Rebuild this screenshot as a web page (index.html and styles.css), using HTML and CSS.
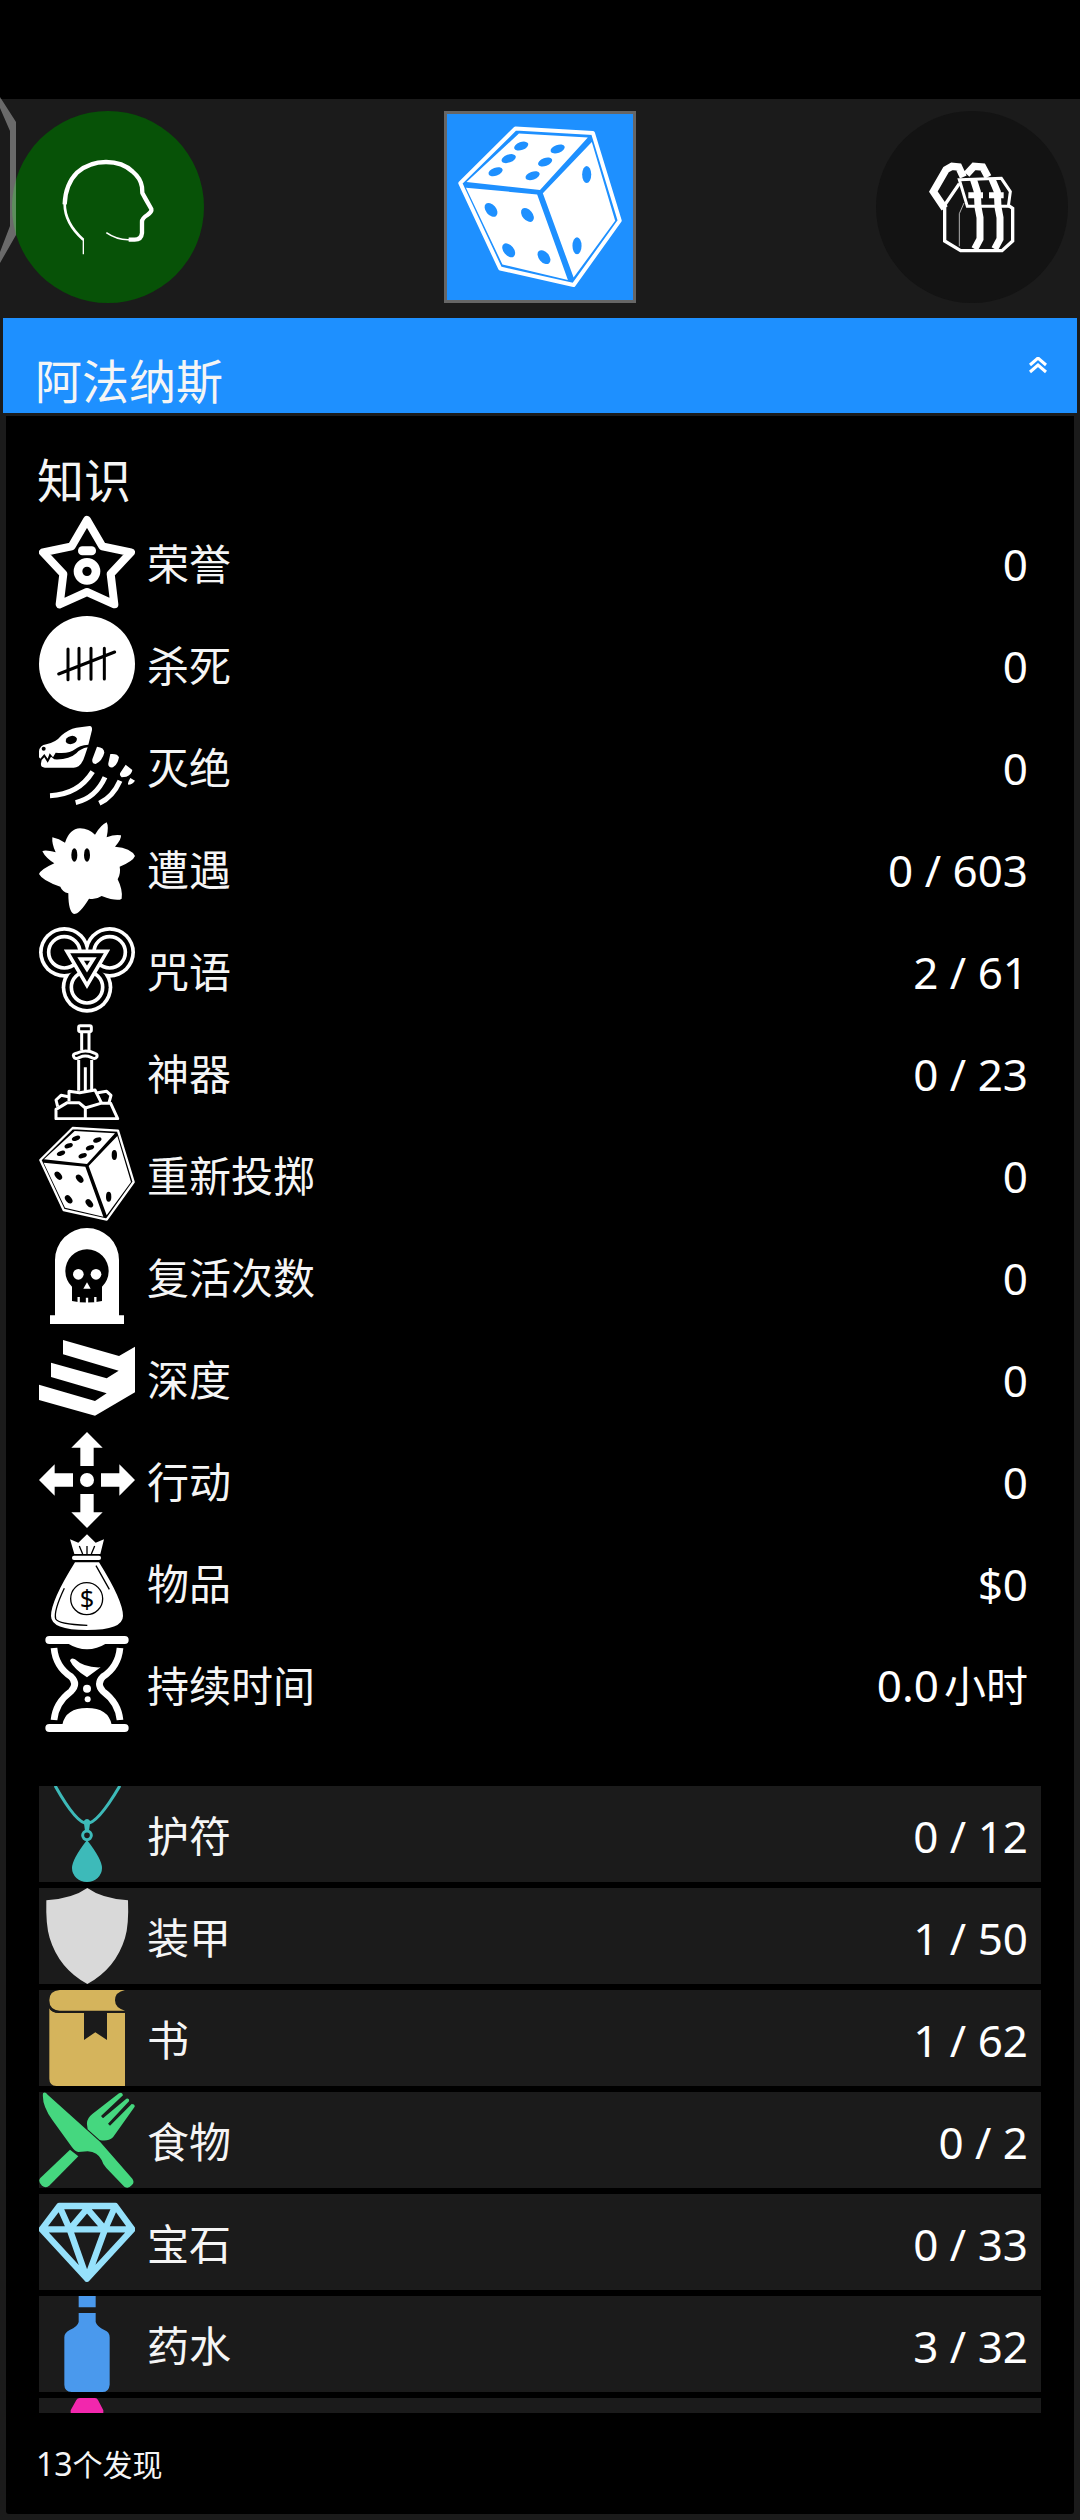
FILE: index.html
```
<!DOCTYPE html>
<html lang="zh-CN">
<head>
    <meta charset="UTF-8">
    <meta name="viewport" content="width=device-width, initial-scale=1.0">
    <title>知识</title>
    <link rel="stylesheet" href="styles.css">
</head>
<body>
    <!-- shared die, used in the header and in the stats -->
    <svg class="defs" aria-hidden="true">
        <symbol id="die" viewBox="0 0 288 288">
            <path d="M101 6L237 14L284 168L203 281L74 252L4 102Z" fill="none" stroke="currentColor" stroke-width="7" stroke-linejoin="round"/>
            <path d="M107 15L228 22L144 114L15 100ZM14 110L139 122L193 272L78 245ZM235 30L276 168L203 268L149 120Z" fill="currentColor"/>
            <g class="pips">
                <ellipse cx="111" cy="37" rx="13" ry="7" transform="rotate(-20 111 37)"/>
                <ellipse cx="89" cy="59" rx="13" ry="7" transform="rotate(-20 89 59)"/>
                <ellipse cx="66" cy="82" rx="13" ry="7" transform="rotate(-20 66 82)"/>
                <ellipse cx="175" cy="42" rx="13" ry="7" transform="rotate(-20 175 42)"/>
                <ellipse cx="153" cy="65" rx="13" ry="7" transform="rotate(-20 153 65)"/>
                <ellipse cx="131" cy="89" rx="13" ry="7" transform="rotate(-20 131 89)"/>
                <ellipse cx="58" cy="149" rx="9" ry="14" transform="rotate(-40 58 149)"/>
                <ellipse cx="122" cy="158" rx="9" ry="14" transform="rotate(-40 122 158)"/>
                <ellipse cx="89" cy="220" rx="9" ry="14" transform="rotate(-40 89 220)"/>
                <ellipse cx="151" cy="232" rx="9" ry="14" transform="rotate(-40 151 232)"/>
                <ellipse cx="226" cy="87" rx="8" ry="15"/>
                <ellipse cx="209" cy="212" rx="8" ry="15"/>
            </g>
        </symbol>
    </svg>

    <header class="toolbar">
        <button class="tool head" aria-label="角色">
            <svg class="icon line" viewBox="0 0 288 288">
                <path d="M70 286V240" stroke-width="4"/>
                <path d="M70 242Q14 192 14 134" stroke-width="8"/>
                <path d="M14 136Q16 76 52 40Q88 9 138 9Q188 9 218 38Q242 58 246 84L247 102L258 122L274 150Q276 158 262 168Q246 178 246 188V222Q244 242 224 242H206" stroke-width="13"/>
                <path d="M210 242Q172 244 139 221" stroke-width="5"/>
            </svg>
        </button>
        <button class="tool dice" aria-label="骰子">
            <svg class="big"><use href="#die"/></svg>
        </button>
        <button class="tool pack" aria-label="背包">
            <svg class="icon line sharp" viewBox="0 0 288 288">
                <path d="M62 148L28 98L66 32L84 22L104 24L118 54M128 46L150 22L176 24L192 54" stroke-width="22"/>
                <path d="M106 74L62 138V246L110 275H234L266 246V148L254 140" stroke-width="10"/>
                <path d="M106 262V164L120 132" stroke-width="2"/>
                <path d="M106 62L232 58L259 98L253 142H130Z" stroke-width="9" fill="#131313"/>
                <path d="M148 60L160 98L162 144L168 176V240L152 270M204 60L220 98L222 144L228 176V240L212 270" stroke-width="21"/>
                <path d="M133 109H177M195 109H239" stroke-width="18"/>
            </svg>
        </button>
        <svg class="edge" viewBox="0 0 16 166">
            <path d="M0 0L16 25V138L0 166V155L10 129V34L0 11Z"/>
        </svg>
    </header>

    <section class="titlebar">
        <h1>阿法纳斯</h1>
        <button class="collapse" aria-label="收起">
            <svg viewBox="0 0 18 18"><path d="M1 8L9 1L17 8M1 15L9 8L17 15"/></svg>
        </button>
    </section>

    <main class="panel">
        <h2>知识</h2>
        <ul class="stats">
            <li>
                <svg class="icon" viewBox="0 0 288 288">
                    <path d="M144 18L190 97L276 115L215 180L226 271L144 234L62 271L73 180L12 115L98 97Z" fill="none" stroke="#fff" stroke-width="24" stroke-linejoin="round"/>
                    <circle cx="144" cy="172" r="27" fill="none" stroke="#fff" stroke-width="26"/>
                    <rect x="117" y="97" width="54" height="27" rx="13"/>
                </svg>
                <span class="label">荣誉</span><span class="value">0</span>
            </li>
            <li>
                <svg class="icon" viewBox="0 0 288 288">
                    <circle cx="144" cy="144" r="144"/>
                    <path d="M87 99V191M120 97V189M156 97V190M196 97V189M59 174L227 108" stroke="#000" stroke-width="9" stroke-linecap="round"/>
                </svg>
                <span class="label">杀死</span><span class="value">0</span>
            </li>
            <li>
                <svg class="icon" viewBox="0 0 288 288">
                    <path d="M0 100Q2 82 22 79Q50 74 68 52Q88 34 112 29L152 24Q160 24 159 36L148 80Q120 82 108 94Q92 108 50 104L42 118L32 106L26 122L16 108L4 122L0 118Z"/>
                    <path d="M8 126L16 118L26 134L36 116L46 124Q90 126 112 106Q124 92 146 88L138 112Q128 148 104 149L18 149Q4 149 6 136Z"/>
                    <path d="M174 86Q196 88 196 104Q190 128 170 138Q158 138 160 124ZM214 108Q236 106 240 118Q236 140 222 148Q206 150 208 136ZM260 140L280 156Q278 170 262 176L248 178Q240 172 244 164ZM274 180L288 188Q280 200 268 200Q264 196 274 180Z"/>
                    <path d="M161 161Q118 230 33 233M198 178Q170 240 110 254M243 188Q222 236 181 256" fill="none" stroke="#fff" stroke-width="15"/>
                    <ellipse cx="97" cy="66" rx="17" ry="12" transform="rotate(-15 97 66)" fill="#000"/>
                    <circle cx="14" cy="92" r="6" fill="#000"/>
                </svg>
                <span class="label">灭绝</span><span class="value">0</span>
            </li>
            <li>
                <svg class="icon" viewBox="0 0 288 288">
                    <path d="M0 162Q6 148 46 130Q20 114 10 94Q18 88 50 97Q38 72 40 52Q60 56 78 68Q92 26 123 25Q150 26 168 44Q186 14 203 7Q210 20 203 52Q228 42 246 46Q248 58 228 80Q276 84 288 108Q282 124 242 140Q246 160 236 178Q252 210 248 236Q236 246 188 228Q170 240 150 236Q122 282 105 282Q88 276 88 220Q70 216 64 200Q10 182 0 162Z"/>
                    <ellipse cx="106" cy="105" rx="9" ry="20" fill="#000"/>
                    <ellipse cx="144" cy="105" rx="9" ry="20" fill="#000"/>
                </svg>
                <span class="label">遭遇</span><span class="value">0 / 603</span>
            </li>
            <li>
                <svg class="icon" viewBox="0 0 288 288">
                    <circle cx="76" cy="91" r="76"/><circle cx="212" cy="91" r="76"/><circle cx="144" cy="196" r="76"/>
                    <g fill="#000"><circle cx="76" cy="91" r="65"/><circle cx="212" cy="91" r="65"/><circle cx="144" cy="196" r="65"/></g>
                    <g fill="none" stroke="#fff" stroke-width="11">
                        <circle cx="76" cy="91" r="47"/><circle cx="212" cy="91" r="47"/><circle cx="144" cy="196" r="47"/>
                        <path d="M84 88H204L144 190Z" fill="#000"/>
                        <path d="M125 111H163L144 141Z"/>
                    </g>
                </svg>
                <span class="label">咒语</span><span class="value">2 / 61</span>
            </li>
            <li>
                <svg class="icon line" viewBox="0 0 288 288" stroke-width="9">
                    <rect x="119" y="5" width="38" height="18" rx="5"/>
                    <path d="M128 26V78M150 26V78"/>
                    <path d="M104 98Q100 90 112 88Q139 74 168 88Q176 90 174 98Q168 108 156 100Q139 92 122 100Q108 108 104 98Z"/>
                    <path d="M119 108V200M158 108V198M139 130V202"/>
                    <path d="M51 284V256L85 236H120L139 252L185 238H215L236 284ZM139 252V284"/>
                    <path d="M90 232V202L122 206L168 198L188 238M56 248L51 228L66 214L88 218M176 206L203 202L216 214L210 236"/>
                </svg>
                <span class="label">神器</span><span class="value">0 / 23</span>
            </li>
            <li>
                <svg class="icon"><use href="#die"/></svg>
                <span class="label">重新投掷</span><span class="value">0</span>
            </li>
            <li>
                <svg class="icon" viewBox="0 0 288 288">
                    <path d="M48 262V96A96 96 0 0 1 240 96V262H255V288H33V262Z"/>
                    <path d="M99 176A65 65 0 1 1 189 176V219Q144 228 99 219Z" fill="#000"/>
                    <circle cx="118" cy="139" r="16"/><circle cx="171" cy="139" r="16"/>
                    <path d="M144 163L155 182H133Z"/>
                    <path d="M119 207V224M144 209V226M169 207V224" stroke="#fff" stroke-width="7"/>
                </svg>
                <span class="label">复活次数</span><span class="value">0</span>
            </li>
            <li>
                <svg class="icon" viewBox="0 0 288 288">
                    <path d="M72 30L240 78L288 50V187L168 257L0 210V164L168 213L203 190L36 141V98L203 145L239 122L72 73Z"/>
                </svg>
                <span class="label">深度</span><span class="value">0</span>
            </li>
            <li>
                <svg class="icon" viewBox="0 0 288 288">
                    <path d="M144 0L191 47H164V102H124V47H97ZM144 288L97 241H124V186H164V241H191ZM0 144L47 97V124H102V164H47V191ZM288 144L241 191V164H186V124H241V97Z"/>
                    <circle cx="144" cy="144" r="21"/>
                </svg>
                <span class="label">行动</span><span class="value">0</span>
            </li>
            <li>
                <svg class="icon" viewBox="0 0 288 288">
                    <path d="M93 16L118 26L144 1L170 26L195 16L184 60H106ZM108 85H180Q252 200 252 246Q252 288 144 288Q36 288 36 246Q36 200 108 85Z"/>
                    <rect x="99" y="65" width="87" height="13" rx="6"/>
                    <g fill="none" stroke="#000" stroke-width="4">
                        <path d="M121 36L131 60M144 36V60M167 36L157 60M171 95L211 166M76 163Q44 230 50 254Q56 270 145 274"/>
                        <circle cx="143" cy="194" r="48"/>
                    </g>
                    <text class="coin" x="144" y="222" text-anchor="middle">$</text>
                </svg>
                <span class="label">物品</span><span class="value">$0</span>
            </li>
            <li>
                <svg class="icon" viewBox="0 0 288 288">
                    <rect x="19" y="0" width="250" height="24" rx="12"/>
                    <rect x="19" y="264" width="250" height="24" rx="12"/>
                    <path d="M85 22Q144 58 203 22ZM93 74Q96 64 108 70Q136 96 185 94L144 124Q104 98 93 74ZM70 266Q80 216 144 216Q208 216 218 266Z"/>
                    <path d="M45 36Q50 92 96 122Q118 144 96 166Q50 200 45 252M243 36Q238 92 192 122Q170 144 192 166Q238 200 243 252" fill="none" stroke="#fff" stroke-width="20"/>
                    <circle cx="144" cy="158" r="12"/><circle cx="146" cy="190" r="9"/>
                </svg>
                <span class="label">持续时间</span><span class="value">0.0<span class="unit">小时</span></span>
            </li>
        </ul>

        <ul class="items">
            <li>
                <svg class="icon amulet" viewBox="0 0 288 288">
                    <path d="M50 2Q112 112 144 112Q176 112 241 2" fill="none" stroke="currentColor" stroke-width="9" stroke-linecap="round"/>
                    <path d="M134 106Q144 92 154 106L150 134H138ZM144 162Q189 220 189 246A45 42 0 0 1 99 246Q99 220 144 162Z"/>
                    <circle cx="144" cy="148" r="13" fill="none" stroke="currentColor" stroke-width="9"/>
                </svg>
                <span class="label">护符</span><span class="value">0 / 12</span>
            </li>
            <li>
                <svg class="icon armor" viewBox="0 0 288 288">
                    <path d="M145 0Q190 32 267 37Q270 112 258 150Q230 242 145 288Q60 242 32 150Q20 112 22 37Q100 32 145 0Z"/>
                </svg>
                <span class="label">装甲</span><span class="value">1 / 50</span>
            </li>
            <li>
                <svg class="icon book" viewBox="0 0 288 288">
                    <path d="M62 0H258Q228 6 228 31Q228 54 258 62H62Q31 60 31 31Q31 2 62 0ZM31 54Q38 70 62 69H258V288H52Q31 286 31 266Z"/>
                    <path d="M31 50Q38 66 62 66H258" fill="none" stroke="#1b1b1b" stroke-width="5"/>
                    <path d="M135 66H204V150L169 127L135 150Z" fill="#1b1b1b"/>
                </svg>
                <span class="label">书</span><span class="value">1 / 62</span>
            </li>
            <li>
                <svg class="icon food" viewBox="0 0 288 288">
                    <path d="M12 4Q18 -2 26 8L183 149L280 260Q288 272 278 280Q268 292 256 284L202 228Q192 218 188 204Q176 180 146 178L118 180Q108 178 98 164L40 84Q8 40 12 4Z"/>
                    <path d="M93 173L118 193L32 280Q20 292 8 280Q-4 268 4 258Z"/>
                    <path d="M144 98Q142 80 160 66L240 4Q250 -2 252 10L186 72L192 79L262 20Q272 18 270 28L207 95L213 101L278 36Q288 36 287 44L222 136Q206 150 182 144L146 112Z"/>
                </svg>
                <span class="label">食物</span><span class="value">0 / 2</span>
            </li>
            <li>
                <svg class="icon gem" viewBox="0 0 288 288">
                    <path d="M61 36H229L280 106L144 254L8 106ZM8 106H280M61 36L92 106L144 254L198 106L229 36M92 106L144 44L198 106" fill="none" stroke="currentColor" stroke-width="19" stroke-linejoin="round"/>
                </svg>
                <span class="label">宝石</span><span class="value">0 / 33</span>
            </li>
            <li>
                <svg class="icon potion" viewBox="0 0 288 288">
                    <path d="M119 0H170V34H119ZM119 51H170V78Q174 92 196 102Q212 108 212 124V266Q210 288 190 288H98Q76 286 76 266V124Q76 110 92 102Q116 92 119 78Z"/>
                </svg>
                <span class="label">药水</span><span class="value">3 / 32</span>
            </li>
            <li>
                <svg class="icon ring" viewBox="0 0 288 288">
                    <path d="M122 0H168Q174 0 177 6L193 37V46L144 90L95 46V37L112 6Q115 0 122 0Z"/>
                </svg>
            </li>
        </ul>

        <p class="found">13<span class="unit">个发现</span></p>
    </main>
</body>
</html>
```
FILE: styles.css
```
* {
    box-sizing: border-box;
}
body {
    margin: 0;
    height: 100vh;
    padding-bottom: 6px;
    display: flex;
    flex-direction: column;
    background: #1b1b1b;
    color: #f5f5f5;
    font-family: "Noto Sans", "Noto Sans CJK SC", sans-serif;
}
button {
    padding: 0;
    border: 0;
    background: none;
    color: #fff;
}
h1, h2, p, ul {
    margin: 0;
    padding: 0;
    font-weight: normal;
}
.defs {
    position: absolute;
    width: 0;
    height: 0;
}
.icon {
    width: 96px;
    height: 96px;
    flex: none;
    fill: currentColor;
    color: #fff;
}
.line {
    fill: none;
    stroke: #fff;
    stroke-linejoin: round;
}
.sharp {
    stroke-linejoin: miter;
}

/* top buttons, under the black status bar */
.toolbar {
    position: relative;
    display: flex;
    justify-content: space-between;
    padding: 12px 12px 15px;
    border-top: 99px solid #000;
}
.tool {
    display: flex;
    align-items: center;
    justify-content: center;
    width: 192px;
    height: 192px;
    border-radius: 50%;
}
.head {
    background: #075207;
}
.dice {
    --pip: #1e90ff;
    border: 3px solid #666;
    border-radius: 0;
    background: #1e90ff;
}
.pack {
    background: #131313;
}
.big {
    width: 164px;
    height: 164px;
}
.pips {
    fill: var(--pip, #000);
}
.edge {
    position: absolute;
    left: 0;
    top: -2px;
    width: 16px;
    height: 166px;
    fill: rgba(255, 255, 255, 0.35);
}

.titlebar {
    display: flex;
    justify-content: space-between;
    align-items: center;
    margin: 0 3px 3px;
    padding: 0 30px 0 32px;
    background: #1e90ff;
}
.titlebar h1 {
    padding-top: 31px;
    font-size: 47px;
    line-height: 64px;
}
.collapse {
    display: flex;
}
.collapse svg {
    width: 18px;
    height: 18px;
    fill: none;
    stroke: #fff;
    stroke-width: 3;
}

.panel {
    flex: 1;
    min-height: 0;
    display: flex;
    flex-direction: column;
    margin: 0 6px;
    padding: 32px 33px 25px;
    background: #000;
    border-radius: 0 0 3px 3px;
}
.panel h2 {
    margin: 0 0 2px -2px;
    font-size: 47px;
    line-height: 64px;
}
.stats, .items {
    display: flex;
    flex-direction: column;
    gap: 6px;
    list-style: none;
}
.stats {
    margin-bottom: 54px;
}
.items {
    flex: 1;
    min-height: 0;
    overflow-y: auto;
    scrollbar-width: none;
}
.panel li {
    display: flex;
    flex: none;
    align-items: center;
    gap: 12px;
    height: 96px;
    padding-right: 13px;
}
.items li {
    background: #1b1b1b;
}
.label, .value {
    padding-top: 3px;
    line-height: 60px;
}
.label {
    flex: 1;
    font-size: 42px;
}
.value {
    font-size: 44px;
    color: #fff;
}
.value .unit {
    margin-left: 5px;
    font-size: 42px;
}
.coin {
    font-size: 76px;
    fill: #000;
}
.amulet { color: #3dbab9; }
.armor { color: #d9d9d9; }
.book { color: #d5b45c; }
.food { color: #45d77f; }
.gem { color: #96e1fb; }
.potion { color: #4a99ed; }
.ring { color: #f227ad; }

.found {
    margin-left: -3px;
    padding-top: 27px;
    font-size: 32px;
    line-height: 48px;
}
.found .unit {
    font-size: 30px;
}
```
